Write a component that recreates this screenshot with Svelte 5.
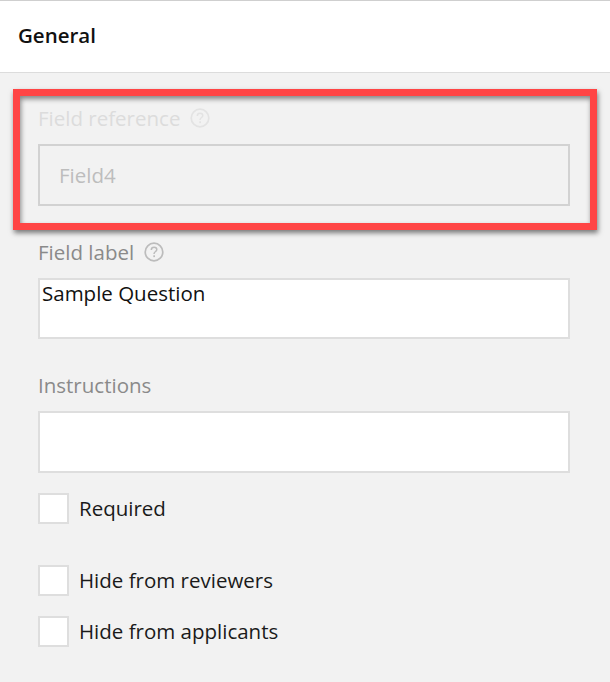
<script>
  const checks = [
    { label: 'Required', cls: 'c1' },
    { label: 'Hide from reviewers', cls: 'c2' },
    { label: 'Hide from applicants', cls: 'c3' }
  ];
</script>

{#snippet help()}
  <svg class="help" width="20" height="20" viewBox="0 0 20 20" aria-hidden="true">
    <circle cx="10" cy="10" r="8.8" fill="none" stroke="currentColor" stroke-width="1.7" />
    <path d="M7.3 7.9c0-1.6 1.2-2.6 2.8-2.6 1.6 0 2.7 1 2.7 2.3 0 1-.6 1.6-1.4 2.1-.7.5-1.3.9-1.3 1.8v.4" fill="none" stroke="currentColor" stroke-width="1.5" />
    <rect x="9.3" y="13.3" width="1.7" height="1.8" fill="currentColor" />
  </svg>
{/snippet}

<div class="page">
  <header class="head">General</header>
  <main class="body">
    <section class="group disabled">
      <div class="label">Field reference {@render help()}</div>
      <div class="input ref">Field4</div>
    </section>
    <section class="group second">
      <div class="label">Field label {@render help()}</div>
      <div class="input value">Sample Question</div>
    </section>
    <section class="group third">
      <div class="label">Instructions</div>
      <div class="input tall"></div>
    </section>
    {#each checks as c}
      <div class="check {c.cls}">
        <span class="box"></span>
        <span>{c.label}</span>
      </div>
    {/each}
    <div class="highlight"></div>
  </main>
</div>

<style>
  :global(body) {
    margin: 0;
    background: #f2f2f2;
  }
  .page {
    width: 610px;
    height: 682px;
    overflow: hidden;
    font-family: "Open Sans", sans-serif;
    font-size: 20.5px;
    color: #1a1a1a;
    background: #f2f2f2;
  }
  .head {
    box-sizing: border-box;
    height: 73px;
    padding: 20px 18px 0;
    line-height: 29px;
    font-weight: 600;
    font-size: 20.5px;
    color: #111;
    background: #fff;
    border-top: 1px solid #cfcfcf;
    border-bottom: 1px solid #dcdcdc;
  }
  .body {
    position: relative;
    padding: 31px 40px 0 38px;
  }
  .label {
    display: flex;
    align-items: center;
    gap: 10px;
    height: 28px;
    line-height: 28px;
    color: #8a8a8a;
  }
  .help {
    color: #bcbcbc;
  }
  .input {
    box-sizing: border-box;
    width: 532px;
    height: 61px;
    margin-top: 12px;
    border: 2px solid #dedede;
    background: #fff;
    color: #111;
    line-height: 27px;
  }
  .value {
    padding: 0 2px;
    line-height: 27px;
  }
  .tall {
    height: 62px;
    margin-top: 12px;
  }
  .disabled .label {
    color: #dcdcdc;
  }
  .disabled .help {
    color: #e3e3e3;
  }
  .ref {
    height: 62px;
    margin-top: 12px;
    padding: 16px 19px 0;
    background: #f2f2f2;
    border-color: #d2d2d2;
    color: #bdbdbd;
  }
  .second {
    margin-top: 32px;
  }
  .third {
    margin-top: 32px;
  }
  .check {
    display: flex;
    align-items: center;
    gap: 10px;
    height: 31px;
    line-height: 31px;
  }
  .c1 {
    margin-top: 20px;
  }
  .c2 {
    margin-top: 41px;
  }
  .c3 {
    margin-top: 20px;
  }
  .box {
    box-sizing: border-box;
    width: 31px;
    height: 31px;
    border: 2px solid #dedede;
    background: #fff;
  }
  .highlight {
    position: absolute;
    left: 13px;
    top: 16px;
    width: 570px;
    height: 127px;
    border: 7px solid #ff4545;
    box-shadow: 1px 3px 5px rgba(0, 0, 0, 0.5), inset 1px 3px 5px rgba(0, 0, 0, 0.45);
  }
</style>
